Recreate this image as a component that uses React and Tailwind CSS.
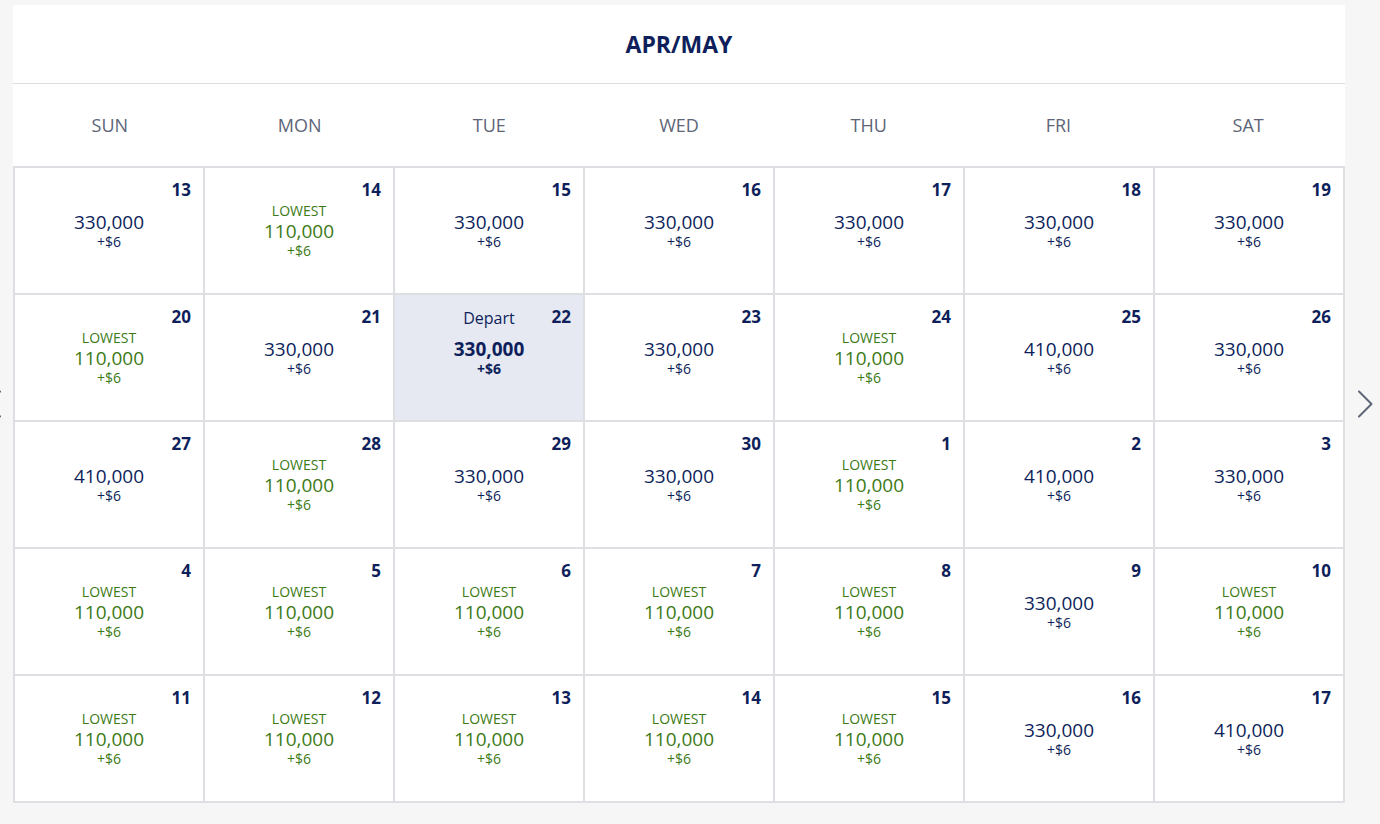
import React from "react";

const L = "L";
const rows = [
  [[13, 330], [14, L], [15, 330], [16, 330], [17, 330], [18, 330], [19, 330]],
  [[20, L], [21, 330], [22, "D"], [23, 330], [24, L], [25, 410], [26, 330]],
  [[27, 410], [28, L], [29, 330], [30, 330], [1, L], [2, 410], [3, 330]],
  [[4, L], [5, L], [6, L], [7, L], [8, L], [9, 330], [10, L]],
  [[11, L], [12, L], [13, L], [14, L], [15, L], [16, 330], [17, 410]],
];

const days = ["SUN", "MON", "TUE", "WED", "THU", "FRI", "SAT"];

function Cell({ day, kind }) {
  const depart = kind === "D";
  const lowest = kind === L;
  const price = lowest ? "110,000" : kind === 410 ? "410,000" : "330,000";
  return (
    <div
      className={`grid h-[125px] ${depart ? "bg-[#e6e9f1]" : "bg-white"}`}
    >
      <div className="col-start-1 row-start-1 flex justify-end items-start pt-[11px] pr-[12px]">
        <span className="text-[17px] leading-[22px] font-bold text-[#0e1f5b]">{day}</span>
      </div>
      {depart && (
        <div className="col-start-1 row-start-1 flex justify-center items-start pt-[12px]">
          <span className="text-[16px] leading-[22px] text-[#0e1f5b]">Depart</span>
        </div>
      )}
      <div className="col-start-1 row-start-1 flex flex-col items-center justify-center">
        {lowest && (
          <span className="text-[14px] leading-[18px] text-[#3c7a16]">LOWEST</span>
        )}
        <span
          className={`text-[19px] leading-[22px] ${
            lowest ? "text-[#3c7a16]" : "text-[#0e1f5b]"
          } ${depart ? "font-bold" : ""}`}
        >
          {price}
        </span>
        <span
          className={`text-[14px] leading-[18px] ${
            lowest ? "text-[#3c7a16]" : "text-[#0e1f5b]"
          } ${depart ? "font-bold" : ""}`}
        >
          +$6
        </span>
      </div>
    </div>
  );
}

export default function App() {
  return (
    <div
      className="w-[1380px] h-[824px] bg-[#f6f6f6] overflow-hidden pt-[5px]"
      style={{ fontFamily: '"Open Sans", "Liberation Sans", sans-serif' }}
    >
      <div className="flex items-center">
        <div className="w-[13px] shrink-0 flex">
          <svg width="16" height="28" viewBox="0 0 16 28" className="-ml-[14px] shrink-0" fill="none">
            <path d="M14 1.5 L1.5 14 L14 26.5" stroke="#5d6577" strokeWidth="2" strokeLinecap="round" strokeLinejoin="round" />
          </svg>
        </div>
        <div className="w-[1332px] shrink-0 bg-white">
          <div className="h-[79px] border-b border-[#dcdde1] flex items-center justify-center">
            <span className="text-[23px] font-bold text-[#0e1f5b]">APR/MAY</span>
          </div>
          <div className="h-[82px] grid grid-cols-7 px-[2px]">
            {days.map((d) => (
              <div key={d} className="flex items-center justify-center text-[18px] text-[#5d6577]">
                {d}
              </div>
            ))}
          </div>
          <div className="grid grid-cols-7 gap-[2px] p-[2px] bg-[#dedfe3]">
            {rows.flat().map(([day, kind], i) => (
              <Cell key={i} day={day} kind={kind} />
            ))}
          </div>
        </div>
        <div className="ml-[12px]">
          <svg width="16" height="28" viewBox="0 0 16 28" fill="none">
            <path d="M2 1.5 L14.5 14 L2 26.5" stroke="#5d6577" strokeWidth="2" strokeLinecap="round" strokeLinejoin="round" />
          </svg>
        </div>
      </div>
    </div>
  );
}
